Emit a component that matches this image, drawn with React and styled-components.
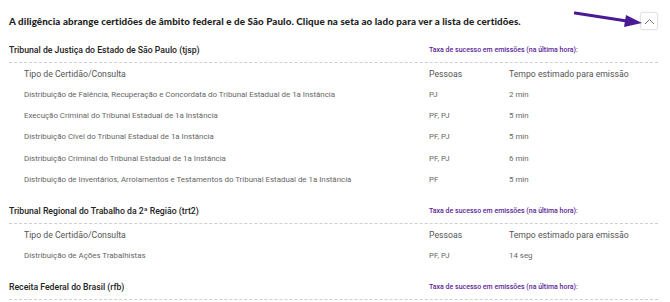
import React from "react";
import styled, { createGlobalStyle } from "styled-components";

const GlobalStyle = createGlobalStyle`
  body {
    margin: 0;
    background: #fff;
    font-family: Roboto, "Liberation Sans", sans-serif;
  }
`;

const sections = [
  {
    title: "Tribunal de Justiça do Estado de São Paulo (tjsp)",
    rows: [
      ["Distribuição de Falência, Recuperação e Concordata do Tribunal Estadual de 1a Instância", "PJ", "2 min"],
      ["Execução Criminal do Tribunal Estadual de 1a Instância", "PF, PJ", "5 min"],
      ["Distribuição Cível do Tribunal Estadual de 1a Instância", "PF, PJ", "5 min"],
      ["Distribuição Criminal do Tribunal Estadual de 1a Instância", "PF, PJ", "6 min"],
      ["Distribuição de Inventários, Arrolamentos e Testamentos do Tribunal Estadual de 1a Instância", "PF", "5 min"],
    ],
  },
  {
    title: "Tribunal Regional do Trabalho da 2ª Região (trt2)",
    rows: [["Distribuição de Ações Trabalhistas", "PF, PJ", "14 seg"]],
  },
  {
    title: "Receita Federal do Brasil (rfb)",
    rows: [],
  },
];

export default function App() {
  return (
    <>
      <GlobalStyle />
      <Page>
        <TopBar>
          <Heading>
            A diligência abrange certidões de âmbito federal e de São Paulo. Clique na seta ao lado para ver a lista de certidões.
          </Heading>
          <Toggle>
            <svg width="11" height="7" viewBox="0 0 11 7">
              <path d="M1 6 L5.5 1.5 L10 6" fill="none" stroke="#777" strokeWidth="1" />
            </svg>
          </Toggle>
          <Pointer width="70" height="16" viewBox="0 0 70 16">
            <line x1="1" y1="2" x2="56" y2="10.5" stroke="#4a1a94" strokeWidth="3" strokeLinecap="round" />
            <path d="M52 4 L68 12 L50 16 Z" fill="#4a1a94" />
          </Pointer>
        </TopBar>

        {sections.map((s) => (
          <Section key={s.title}>
            <TitleRow>
              <Title>{s.title}</Title>
              <Rate>Taxa de sucesso em emissões (na última hora):</Rate>
            </TitleRow>
            {s.rows.length > 0 && (
              <Table>
                <HeadCell>Tipo de Certidão/Consulta</HeadCell>
                <HeadCell>Pessoas</HeadCell>
                <HeadCell>Tempo estimado para emissão</HeadCell>
                {s.rows.map((r) => (
                  <React.Fragment key={r[0]}>
                    <Cell>{r[0]}</Cell>
                    <Cell>{r[1]}</Cell>
                    <Cell>{r[2]}</Cell>
                  </React.Fragment>
                ))}
              </Table>
            )}
          </Section>
        ))}
      </Page>
    </>
  );
}

const Page = styled.div`
  padding: 10px 12px 0 9px;
  height: 302px;
  box-sizing: border-box;
  overflow: hidden;
`;

const TopBar = styled.div`
  position: relative;
  display: flex;
  align-items: center;
  justify-content: space-between;
  height: 22px;
  margin-bottom: 12px;
`;

const Heading = styled.h1`
  margin: 0;
  font-family: Lato, "DejaVu Sans", sans-serif;
  font-weight: 900;
  font-size: 9.8px;
  letter-spacing: 0.1px;
  color: #1e1e1e;
  white-space: nowrap;
`;

const Toggle = styled.button`
  width: 18px;
  height: 18px;
  padding: 0;
  display: flex;
  align-items: center;
  justify-content: center;
  background: #fff;
  border: 1px solid #e2e2e2;
  border-radius: 3px;
  box-shadow: 0 0 2px rgba(0, 0, 0, 0.08);
`;

const Pointer = styled.svg`
  position: absolute;
  left: 565px;
  top: 1px;
`;

const Section = styled.section`
  margin-bottom: 15px;
`;

const TitleRow = styled.div`
  display: grid;
  grid-template-columns: 420px 1fr;
  align-items: center;
  height: 12px;
  padding-bottom: 6px;
  border-bottom: 1px dashed #cfcfcf;
`;

const Title = styled.div`
  font-size: 8.7px;
  font-weight: 500;
  color: #222;
`;

const Rate = styled.div`
  font-size: 7px;
  font-weight: 500;
  color: #5b1f97;
`;

const Table = styled.div`
  display: grid;
  grid-template-columns: 405px 80px 1fr;
  grid-auto-rows: 21.2px;
  grid-template-rows: 20px;
  padding: 1px 0 0 15px;
  align-items: center;
`;

const HeadCell = styled.div`
  font-size: 8.7px;
  color: #555;
`;

const Cell = styled.div`
  font-size: 7.9px;
  color: #666;
  white-space: nowrap;
`;
